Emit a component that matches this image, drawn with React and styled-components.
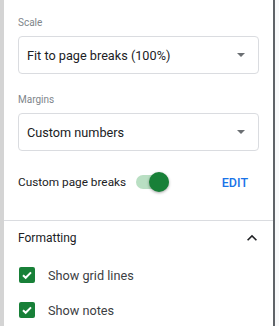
import React, { useState } from 'react';
import styled, { createGlobalStyle } from 'styled-components';

const GlobalStyle = createGlobalStyle`
  body {
    margin: 0;
    background: #ffffff;
    font-family: Roboto, 'Liberation Sans', Arial, sans-serif;
  }
`;

const green = '#188038';

const Frame = styled.div`
  display: flex;
  width: 279px;
  height: 326px;
  overflow: hidden;
  background: #f8f9fa;
`;

const Panel = styled.aside`
  width: 269px;
  flex-shrink: 0;
  background: #ffffff;
  border-left: 4px solid #d4d4d4;
  border-right: 2px solid #5f6368;
  display: flex;
  flex-direction: column;
`;

const Section = styled.section`
  padding: ${(p) => p.$pad || '16px 14px 26px'};
  display: flex;
  flex-direction: column;
`;

const Divider = styled.hr`
  margin: 0;
  border: none;
  border-top: 1px solid #dadce0;
`;

const FieldLabel = styled.label`
  display: block;
  font-size: 10px;
  line-height: 14px;
  color: #80868b;
  margin-bottom: 6px;
  margin-top: ${(p) => p.$gap || 0}px;
`;

const Select = styled.div`
  box-sizing: border-box;
  height: 38px;
  border: 1px solid #dadce0;
  border-radius: 4px;
  padding: 0 13px 0 8px;
  display: flex;
  align-items: center;
  justify-content: space-between;
  font-size: 12.7px;
  color: #202124;
`;

const Caret = styled.span`
  width: 0;
  height: 0;
  border-left: 4px solid transparent;
  border-right: 4px solid transparent;
  border-top: 4px solid #6b6f73;
`;

const ToggleRow = styled.div`
  margin-top: 19px;
  height: 24px;
  display: flex;
  align-items: center;
  font-size: 11.8px;
  color: #202124;
`;

const Track = styled.button`
  position: relative;
  margin-left: 10px;
  width: 33px;
  height: 14px;
  padding: 0;
  border: none;
  border-radius: 7px;
  background: ${(p) => (p.$on ? '#b9dfc3' : '#bdc1c6')};
  cursor: pointer;
`;

const Thumb = styled.span`
  position: absolute;
  top: -3px;
  left: ${(p) => (p.$on ? '13px' : '-1px')};
  width: 20px;
  height: 20px;
  border-radius: 50%;
  background: ${(p) => (p.$on ? green : '#f1f3f4')};
  box-shadow: 0 1px 3px rgba(0, 0, 0, 0.35);
`;

const EditLink = styled.span`
  margin-left: auto;
  margin-right: 11px;
  font-size: 12.5px;
  font-weight: 500;
  color: #1a73e8;
`;

const Header = styled.div`
  height: 20px;
  display: flex;
  align-items: center;
  justify-content: space-between;
  font-size: 12px;
  color: #202124;
  margin-right: -3px;
`;

const CheckRow = styled.div`
  display: flex;
  align-items: center;
  height: 20px;
  margin-top: ${(p) => p.$gap}px;
  font-size: 12.7px;
  color: #3c4043;
`;

const Box = styled.span`
  width: 16px;
  height: 16px;
  border-radius: 2px;
  background: ${green};
  display: flex;
  align-items: center;
  justify-content: center;
  margin-left: 1px;
  margin-right: 13px;
`;

const Check = () => (
  <svg width="12" height="12" viewBox="0 0 12 12">
    <path d="M2 6.2 4.7 8.8 10 3.4" fill="none" stroke="#fff" strokeWidth="2" />
  </svg>
);

const ChevronUp = () => (
  <svg width="20" height="20" viewBox="0 0 24 24">
    <path d="M12 8l-6 6 1.41 1.41L12 10.83l4.59 4.58L18 14z" fill="#202124" />
  </svg>
);

const App = () => {
  const [breaks, setBreaks] = useState(true);

  return (
    <>
      <GlobalStyle />
      <Frame>
        <Panel>
          <Section>
            <FieldLabel>Scale</FieldLabel>
            <Select>
              Fit to page breaks (100%)
              <Caret />
            </Select>
            <FieldLabel $gap={19}>Margins</FieldLabel>
            <Select>
              Custom numbers
              <Caret />
            </Select>
            <ToggleRow>
              Custom page breaks
              <Track $on={breaks} onClick={() => setBreaks((v) => !v)}>
                <Thumb $on={breaks} />
              </Track>
              <EditLink>EDIT</EditLink>
            </ToggleRow>
          </Section>
          <Divider />
          <Section $pad="7px 14px 0 14px">
            <Header>
              Formatting
              <ChevronUp />
            </Header>
            <CheckRow $gap={17}>
              <Box>
                <Check />
              </Box>
              Show grid lines
            </CheckRow>
            <CheckRow $gap={15}>
              <Box>
                <Check />
              </Box>
              Show notes
            </CheckRow>
          </Section>
        </Panel>
      </Frame>
    </>
  );
};

export default App;
